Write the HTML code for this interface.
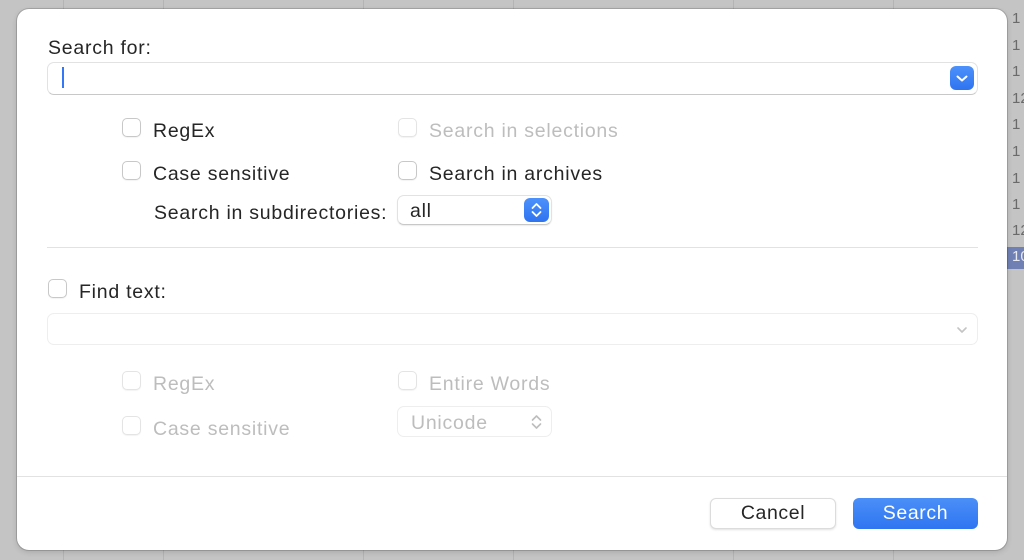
<!DOCTYPE html>
<html><head><style>
body{margin:0;width:1024px;height:560px;background:#c4c4c4;position:relative;overflow:hidden;font-family:"Liberation Sans",sans-serif;}
.vl{position:absolute;top:0;height:560px;width:1px;background:#b4b4b4}
.num{position:absolute;left:1012px;font-size:15px;color:#6a6a6a}
.dlg{position:absolute;left:17px;top:9px;width:990px;height:541px;background:#fff;border-radius:12px;box-shadow:0 0 0 1px rgba(0,0,0,.15),0 2px 6px rgba(0,0,0,.15)}
.t{position:absolute;font-size:19.5px;letter-spacing:0.75px;color:#262626;white-space:nowrap;margin-top:1px}
.g{color:#bdbdbd}
.cb{position:absolute;width:19px;height:19px;border:1px solid #c8c8c8;border-radius:5px;background:#fff;box-sizing:border-box;box-shadow:0 1px 1px rgba(0,0,0,.05)}
.cb.g{border-color:#e4e4e4}
.field{position:absolute;border:1px solid #e2e2e2;border-bottom-color:#c8c8c8;border-radius:7px;background:#fff;box-sizing:border-box}
.hr{position:absolute;height:1px;background:#e2e2e2}
.btn{position:absolute;border-radius:6px;font-size:19.5px;letter-spacing:0.6px;text-align:center;box-sizing:border-box}
</style></head><body>
<div class="vl" style="left:63px"></div><div class="vl" style="left:163px"></div><div class="vl" style="left:363px"></div><div class="vl" style="left:513px"></div><div class="vl" style="left:733px"></div><div class="vl" style="left:893px"></div>
<div style="position:absolute;left:1007px;top:247px;width:17px;height:22px;background:#7080b4"></div>
<div class="num" style="top:10px">1</div><div class="num" style="top:37px">1</div><div class="num" style="top:63px">1</div><div class="num" style="top:90px">12</div><div class="num" style="top:116px">1</div><div class="num" style="top:143px">1</div><div class="num" style="top:170px">1</div><div class="num" style="top:196px">1</div><div class="num" style="top:222px">12</div><div class="num" style="top:248px;color:#e8eaf2">10</div>
<div class="dlg"></div>
<div class="t" style="left:48px;top:36px">Search for:</div>
<div class="field" style="left:47px;top:62px;width:931px;height:33px"></div>
<div style="position:absolute;left:62px;top:67px;width:2px;height:21px;background:#3478f6"></div>
<div style="position:absolute;left:950px;top:66px;width:24px;height:24px;border-radius:6px;background:linear-gradient(#4d91fb,#2f74f0)"><svg width="24" height="24"><path d="M7.5 10.5l4.5 4 4.5-4" stroke="#fff" stroke-width="2" fill="none" stroke-linecap="round" stroke-linejoin="round"/></svg></div>
<div class="cb" style="left:122px;top:118px"></div><div class="t" style="left:153px;top:119px">RegEx</div>
<div class="cb g" style="left:398px;top:118px"></div><div class="t g" style="left:429px;top:119px">Search in selections</div>
<div class="cb" style="left:122px;top:161px"></div><div class="t" style="left:153px;top:162px">Case sensitive</div>
<div class="cb" style="left:398px;top:161px"></div><div class="t" style="left:429px;top:162px">Search in archives</div>
<div class="t" style="left:154px;top:201px">Search in subdirectories:</div>
<div class="field" style="left:397px;top:195px;width:155px;height:30px;box-shadow:0 1px 1px rgba(0,0,0,.08)"></div>
<div class="t" style="left:410px;top:199px">all</div>
<div style="position:absolute;left:524px;top:198px;width:25px;height:24px;border-radius:6px;background:linear-gradient(#4d91fb,#2f74f0)"><svg width="25" height="24"><path d="M8.5 10l4-4 4 4M8.5 14l4 4 4-4" stroke="#fff" stroke-width="1.8" fill="none" stroke-linecap="round" stroke-linejoin="round"/></svg></div>
<div class="hr" style="left:47px;top:247px;width:931px"></div>
<div class="cb" style="left:48px;top:279px"></div><div class="t" style="left:79px;top:280px">Find text:</div>
<div class="field" style="left:47px;top:313px;width:931px;height:32px;border-color:#eee"></div>
<div style="position:absolute;left:950px;top:317px;width:24px;height:24px"><svg width="24" height="24"><path d="M8 11l4 4 4-4" stroke="#c4c4c4" stroke-width="1.6" fill="none" stroke-linecap="round" stroke-linejoin="round"/></svg></div>
<div class="cb g" style="left:122px;top:371px"></div><div class="t g" style="left:153px;top:372px">RegEx</div>
<div class="cb g" style="left:398px;top:371px"></div><div class="t g" style="left:429px;top:372px">Entire Words</div>
<div class="cb g" style="left:122px;top:416px"></div><div class="t g" style="left:153px;top:417px">Case sensitive</div>
<div class="field" style="left:397px;top:406px;width:155px;height:31px;border-color:#eee"></div>
<div class="t g" style="left:411px;top:411px">Unicode</div>
<svg style="position:absolute;left:524px;top:410px" width="25" height="24"><path d="M8.5 10l4-4 4 4M8.5 14l4 4 4-4" stroke="#bdbdbd" stroke-width="1.6" fill="none" stroke-linecap="round" stroke-linejoin="round"/></svg>
<div class="hr" style="left:17px;top:476px;width:990px"></div>
<div class="btn" style="left:710px;top:498px;width:126px;height:31px;border:1px solid #dcdcdc;background:#fff;color:#262626;line-height:29px;box-shadow:0 1px 2px rgba(0,0,0,.12)">Cancel</div>
<div class="btn" style="left:853px;top:498px;width:125px;height:31px;background:linear-gradient(#4b8ff8,#2f75f1);color:#fff;line-height:31px">Search</div>
</body></html>
